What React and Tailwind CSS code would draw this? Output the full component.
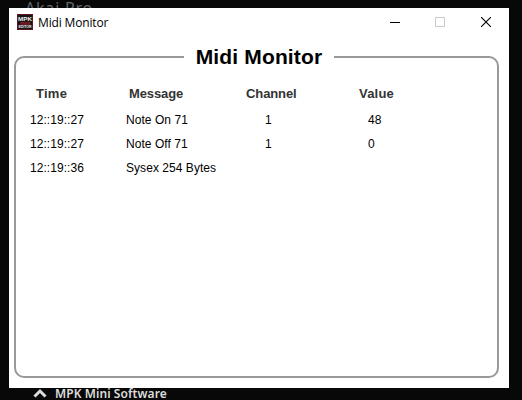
const rows = [
  ['12::19::27', 'Note On 71', '1', '48'],
  ['12::19::27', 'Note Off 71', '1', '0'],
  ['12::19::36', 'Sysex 254 Bytes', '', ''],
];

function AppIcon() {
  return (
    <svg width="16" height="16" viewBox="0 0 16 16" className="shrink-0">
      <rect width="16" height="16" fill="#5e1420" />
      <rect x="1" y="1" width="14" height="14" fill="#161616" />
      <text x="1" y="6.5" fontSize="5.5" fontWeight="bold" textLength="14" lengthAdjust="spacingAndGlyphs" fill="#f0f0f0" fontFamily="Liberation Sans, sans-serif">MPK</text>
      <text x="3" y="10.5" fontSize="5" fontWeight="bold" textLength="10" lengthAdjust="spacingAndGlyphs" fill="#b81c30" fontFamily="Liberation Sans, sans-serif">mini</text>
      <text x="1.5" y="14" fontSize="3.2" fontWeight="bold" textLength="13" lengthAdjust="spacingAndGlyphs" fill="#f0f0f0" fontFamily="Liberation Sans, sans-serif">EDITOR</text>
    </svg>
  );
}

function TitleBar() {
  return (
    <header className="flex h-7 items-center pl-2">
      <AppIcon />
      <span className="ml-[5px] grow pt-px font-['Open_Sans',sans-serif] text-[12px] leading-4 tracking-[-0.15px] text-black">
        Midi Monitor
      </span>
      <div className="flex">
        <div className="flex w-[46px] items-center justify-center">
          <svg width="10" height="10" shapeRendering="crispEdges"><path d="M0 5.5h10" stroke="#000" /></svg>
        </div>
        <div className="flex w-[44px] items-center justify-center">
          <svg width="10" height="10"><rect x=".5" y=".5" width="9" height="9" fill="none" stroke="#ccc" /></svg>
        </div>
        <div className="flex w-[47px] items-center justify-center">
          <svg width="10" height="10"><path d="M0 0l10 10M10 0L0 10" stroke="#000" strokeWidth="1.1" /></svg>
        </div>
      </div>
    </header>
  );
}

export default function App() {
  return (
    <div className="flex h-[400px] w-[522px] flex-col overflow-hidden bg-[#080808]">
      <div className="h-2 shrink-0 overflow-hidden pl-[25px] font-['Noto_Sans',sans-serif] text-[16px] leading-4 tracking-[0.8px] text-[#62666f]">
        Akai Pro
      </div>
      <main className="ml-[9px] flex h-[380px] w-[500px] shrink-0 flex-col bg-white font-['Liberation_Sans',Arial,sans-serif]">
        <TitleBar />
        <section className="mt-5 ml-[5px] h-[322px] w-[485px] rounded-[10px] border-2 border-[#999]">
          <h1 className="-mt-[13px] ml-[168px] h-6 w-[150px] bg-white text-center text-[21px] leading-6 font-bold tracking-[0.15px] text-black">
            Midi Monitor
          </h1>
          <div className="mt-[15px] grid h-5 grid-cols-[93px_117px_113px_80px] pl-[20px] text-[13px] leading-5 font-bold text-[#333]">
            <span className="tracking-[0.25px]">Time</span>
            <span className="tracking-[-0.1px]">Message</span>
            <span className="tracking-[-0.1px]">Channel</span>
            <span className="tracking-[0.2px]">Value</span>
          </div>
          <div className="mt-[4px] text-[12px] leading-6 text-black">
            {rows.map((r, i) => (
              <div key={i} className="grid h-6 grid-cols-[96px_139px_103px_60px] pl-[14px]">
                {r.map((c, j) => (
                  <span key={j} className="tracking-[0.05px]">{c}</span>
                ))}
              </div>
            ))}
          </div>
        </section>
      </main>
      <footer className="flex h-3 shrink-0 overflow-hidden pl-[33px]">
        <svg width="14" height="12" className="shrink-0"><path d="M1.5 8.5L7 3L12.5 8.5" fill="none" stroke="#ddd" strokeWidth="3" /></svg>
        <span className="ml-2 font-['Noto_Sans',sans-serif] text-[12px] leading-3 font-semibold tracking-[0.08px] text-[#ddd]">MPK Mini Software</span>
      </footer>
    </div>
  );
}
